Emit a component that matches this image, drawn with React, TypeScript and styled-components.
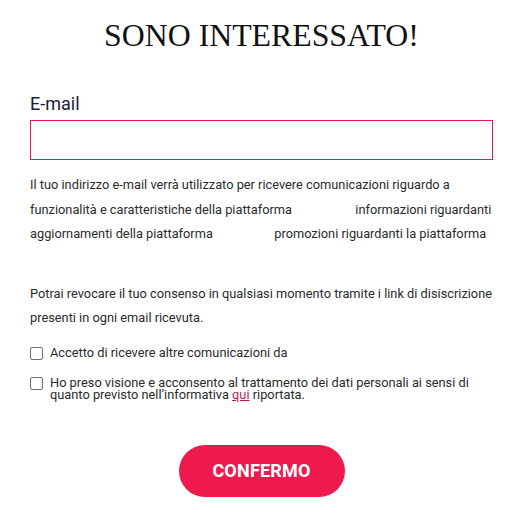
import React from "react";
import styled, { createGlobalStyle } from "styled-components";

const Global = createGlobalStyle`
  html, body { margin: 0; padding: 0; background: #fff; }
  body { font-family: Roboto, "Liberation Sans", sans-serif; }
  * { box-sizing: border-box; }
`;

const Page = styled.div`
  width: 507px;
  padding: 20px 14px 0 30px;
  display: flex;
  flex-direction: column;
`;

const Title = styled.h1`
  margin: 0;
  font-family: "Liberation Serif", "Times New Roman", serif;
  font-weight: 400;
  font-size: 31.8px;
  line-height: 32px;
  color: #111;
  text-align: center;
`;

const Label = styled.label`
  margin-top: 41px;
  font-size: 18px;
  line-height: 22px;
  color: #1b1b3a;
`;

const Input = styled.input`
  margin-top: 5px;
  width: 463px;
  height: 40px;
  border: 1px solid #e3194d;
  outline: none;
  padding: 0 10px;
  font-size: 14px;
`;

const Para = styled.p<{ $top: number }>`
  margin: ${(p) => p.$top}px 0 0;
  font-size: 12.8px;
  line-height: 24.5px;
  color: #2b2b2b;
  white-space: nowrap;
`;

const Hidden = styled.span<{ $w: number }>`
  display: inline-block;
  width: ${(p) => p.$w}px;
`;

const CheckRow = styled.label<{ $top: number }>`
  margin-top: ${(p) => p.$top}px;
  display: flex;
  align-items: flex-start;
  gap: 7px;
  font-size: 12.8px;
  line-height: 12.5px;
  color: #2b2b2b;
`;

const Box = styled.span`
  flex: none;
  width: 13px;
  height: 13px;
  border: 1px solid #707070;
  border-radius: 2px;
  background: #fff;
`;

const Link = styled.a`
  color: #c2185b;
  text-decoration: underline;
`;

const ButtonWrap = styled.div`
  margin-top: 43px;
  display: flex;
  justify-content: center;
`;

const Button = styled.button`
  width: 166px;
  height: 52px;
  border: none;
  border-radius: 26px;
  background: #ee1a4d;
  color: #fff;
  font-family: Roboto, "Liberation Sans", sans-serif;
  font-weight: 700;
  font-size: 18px;
  letter-spacing: 0.2px;
  cursor: pointer;
`;

export default function App() {
  return (
    <>
      <Global />
      <Page>
        <Title>SONO INTERESSATO!</Title>
        <Label>E-mail</Label>
        <Input type="email" />
        <Para $top={13}>
          Il tuo indirizzo e-mail verrà utilizzato per ricevere comunicazioni riguardo a
          <br />
          funzionalità e caratteristiche della piattaforma <Hidden $w={57} /> informazioni
          riguardanti
          <br />
          aggiornamenti della piattaforma <Hidden $w={55} /> promozioni riguardanti la
          piattaforma
        </Para>
        <Para $top={35}>
          Potrai revocare il tuo consenso in qualsiasi momento tramite i link di disiscrizione
          <br />
          presenti in ogni email ricevuta.
        </Para>
        <CheckRow $top={16}>
          <Box />
          <span>Accetto di ricevere altre comunicazioni da</span>
        </CheckRow>
        <CheckRow $top={17}>
          <Box />
          <span>
            Ho preso visione e acconsento al trattamento dei dati personali ai sensi di
            <br />
            quanto previsto nell’informativa <Link href="#">qui</Link> riportata.
          </span>
        </CheckRow>
        <ButtonWrap>
          <Button>CONFERMO</Button>
        </ButtonWrap>
      </Page>
    </>
  );
}
